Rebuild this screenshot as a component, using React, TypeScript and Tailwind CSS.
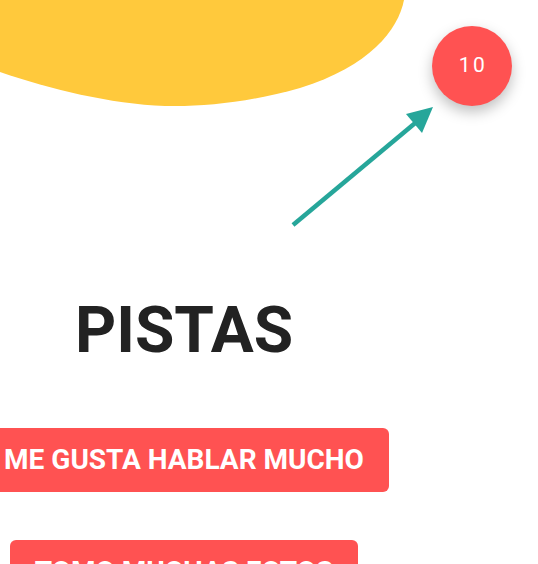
import React from "react";

const hints = ["ME GUSTA HABLAR MUCHO", "TOMO MUCHAS FOTOS"];

const App = () => {
  return (
    <div
      className="relative w-[538px] h-[564px] overflow-hidden bg-white"
      style={{ fontFamily: "Roboto, 'Noto Sans', sans-serif" }}
    >
      {/* Yellow blob */}
      <svg className="absolute left-0 top-0" width="420" height="120" viewBox="0 0 420 120">
        <path
          d="M0,0 L404,0 C398,30 370,66 300,88 C250,102 205,107 165,106 C110,104 50,89 0,72 Z"
          fill="#FFC93C"
        />
      </svg>

      {/* Arrow pointing at badge */}
      <svg className="absolute left-0 top-0" width="538" height="300" viewBox="0 0 538 300">
        <line x1="293" y1="225" x2="420" y2="119" stroke="#26A69A" strokeWidth="4.5" />
        <polygon points="433,107 406,114 422,133" fill="#26A69A" />
      </svg>

      <div className="relative flex flex-col">
        {/* Counter badge */}
        <div className="flex justify-end pt-[26px] pr-[26px]">
          <div className="w-[80px] h-[80px] rounded-full bg-[#FF5252] shadow-[0_6px_14px_rgba(0,0,0,0.25)] flex items-center justify-center">
            <span className="text-white text-[21px] tracking-[2.5px] pl-[2px]">10</span>
          </div>
        </div>

        {/* Hints */}
        <div className="w-[368px] flex flex-col items-center mt-[193px]">
          <h1 className="text-[64px] leading-none font-bold text-[#222222]">PISTAS</h1>
          <div className="flex flex-col items-center gap-[48px] mt-[65px]">
            {hints.map((hint) => (
              <button
                key={hint}
                className="shrink-0 whitespace-nowrap h-[64px] px-[25px] rounded-[6px] bg-[#FF5252] text-white text-[28px] font-bold"
              >
                {hint}
              </button>
            ))}
          </div>
        </div>
      </div>
    </div>
  );
};

export default App;
